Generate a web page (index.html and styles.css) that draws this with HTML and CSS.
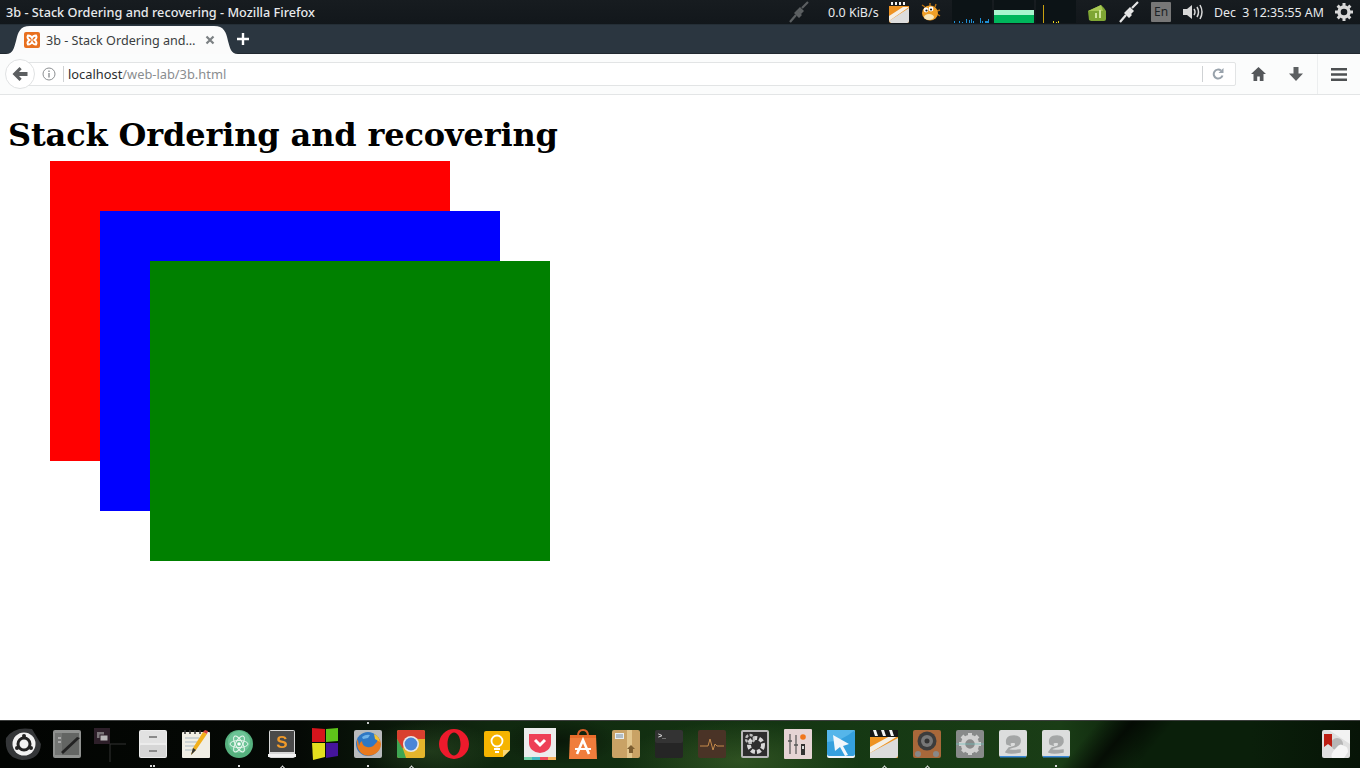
FILE: index.html
```html
<!DOCTYPE html>
<html lang="en">
<head>
<meta charset="utf-8">
<title>3b - Stack Ordering and recovering - Mozilla Firefox</title>
<link rel="stylesheet" href="styles.css">
</head>
<body>
<header class="topbar">
  <div class="window-title">3b - Stack Ordering and recovering - Mozilla Firefox</div>
  <div class="tray">
    <svg class="tray-plug-dim" width="20" height="22" viewBox="0 0 20 22"><path d="M1 21 7 14M13 7l6-6" stroke="#5b5f61" stroke-width="2.2" fill="none"/><path d="M5 12l3-3 5 5-3 3z M8 9l3-3 4 4-3 3z" fill="#5b5f61"/></svg>
    <span class="tray-speed">0.0 KiB/s</span>
    <svg class="tray-clapper" width="20" height="22" viewBox="0 0 20 22"><rect width="20" height="22" rx="2" fill="#ee9322"/><path d="M0 20 20 7v13a2 2 0 0 1-2 2H2z" fill="#ddd"/><path d="M0 15 14 6h6L0 20z" fill="#f5efe6"/><rect width="20" height="5" fill="#1b1b1b"/><path d="M2 1h2v3H2zM6 1h2v3H6zM10 1h2v3h-2zM14 1h2v3h-2z" fill="#f4f4f4"/></svg>
    <svg class="tray-fish" width="20" height="18" viewBox="0 0 20 18"><path d="M1 2l3 2M9 0v3M15 1l-1 3M19 7l-3 1M19 13l-3-2" stroke="#b86f10" stroke-width="1.4"/><ellipse cx="9" cy="10" rx="8" ry="7.5" fill="#f0a028"/><ellipse cx="8" cy="14" rx="5" ry="3" fill="#f8e6b8"/><circle cx="5" cy="7" r="2.4" fill="#fff"/><circle cx="10" cy="6" r="2.4" fill="#fff"/><circle cx="5.5" cy="7.5" r="1.1" fill="#222"/><circle cx="10" cy="6.5" r="1.1" fill="#222"/></svg>
    <svg class="graph graph-net" width="40" height="23" viewBox="0 0 40 23"><path d="M2 21h1v2H2zM7 21h1v2H7zM10 22h1v1h-1zM14 19h1v4h-1zM17 20h1v3h-1zM19 19h1v4h-1zM21 21h1v2h-1zM28 18h1v5h-1zM30 21h1v2h-1zM33 21h3v2h-3zM36 19h1v4h-1z" fill="#1f8fd6"/></svg>
    <svg class="graph graph-mem" width="40" height="23" viewBox="0 0 40 23"><rect y="10" width="40" height="5" fill="#a9f6cf"/><rect y="15" width="40" height="8" fill="#00b65c"/></svg>
    <svg class="graph graph-load" width="40" height="23" viewBox="0 0 40 23"><rect x="7" y="5" width="1" height="18" fill="#c8a010"/><path d="M17 21h1v2h-1zM20 22h1v1h-1zM22 21h1v2h-1z" fill="#e8d020"/></svg>
    <svg class="tray-wallet" width="20" height="17" viewBox="0 0 20 17"><path d="M1 7l13-6 3 3 2 3v8a2 2 0 0 1-2 2H4l-2-1z" fill="#7fa634"/><path d="M1 7l13-6 2 6z" fill="#a9c955"/><path d="M8 14V9h2v5zM12 14V6h2v8z" fill="#cfe59a"/></svg>
    <svg class="tray-plug" width="20" height="22" viewBox="0 0 20 22"><path d="M1 21 7 14M13 7l6-6" stroke="#e6e6e6" stroke-width="2.2" fill="none"/><path d="M5 12l3-3 5 5-3 3z M8 9l3-3 4 4-3 3z" fill="#e6e6e6"/></svg>
    <span class="tray-lang">En</span>
    <svg class="tray-volume" width="20" height="18" viewBox="0 0 20 18"><path d="M0 6h4l5-4v14l-5-4H0z" fill="#d8d8d8"/><path d="M11 6q2 3 0 6M14 4q3 5 0 10M17 2q4 7 0 14" stroke="#d8d8d8" stroke-width="1.5" fill="none"/></svg>
    <span class="tray-date">Dec&nbsp; 3 12:35:55 AM</span>
    <svg class="tray-gear" width="18" height="18" viewBox="0 0 18 18"><circle cx="9" cy="9" r="5" fill="none" stroke="#d8d8d8" stroke-width="3.4"/><path d="M9 0v18M0 9h18M2.6 2.6l12.8 12.8M15.4 2.6 2.6 15.4" stroke="#d8d8d8" stroke-width="3" stroke-dasharray="3 12"/></svg>
  </div>
</header>

<div class="tabbar">
  <div class="tab">
    <svg class="favicon" width="16" height="16" viewBox="0 0 16 16"><rect width="16" height="16" rx="2" fill="#e8701f"/><path d="M4 3.500q3 0 4 2.500 1-2.500 4-2.500 1.500 2.500-1.500 4.500 3 2 1.500 4.500-3 0-4-2.500-1 2.500-4 2.500Q2.500 10 5.500 8 2.500 6 4 3.500z" fill="none" stroke="#fff" stroke-width="1.900"/></svg>
    <span class="tab-title">3b - Stack Ordering and…</span>
    <svg class="tab-close" width="10" height="10" viewBox="0 0 10 10"><path d="M1.500 1.500l7 7M8.500 1.500l-7 7" stroke="#7c8083" stroke-width="2.200"/></svg>
  </div>
  <svg class="new-tab" width="14" height="14" viewBox="0 0 14 14"><path d="M7 1v12M1 7h12" stroke="#fff" stroke-width="2.400"/></svg>
</div>

<nav class="navbar">
  <div class="urlbar">
    <svg class="info" width="14" height="14" viewBox="0 0 14 14"><circle cx="7" cy="7" r="6" fill="none" stroke="#8c8f92" stroke-width="1"/><path d="M7 6v4.500M7 3.500v1.500" stroke="#8c8f92" stroke-width="1.400"/></svg>
    <span class="url-sep"></span>
    <span class="url"><span class="url-host">localhost</span>/web-lab/3b.html</span>
    <span class="url-sep url-sep-end"></span>
    <svg class="reload" width="12" height="12" viewBox="0 0 12 12"><path d="M10.500 7.500A4.500 4.500 0 1 1 9 2.500" fill="none" stroke="#98a2ab" stroke-width="2"/><path d="M6.500 5h5V0z" fill="#98a2ab"/></svg>
  </div>
  <div class="back">
    <svg width="16" height="14" viewBox="0 0 16 14"><path d="M7.500 0 .5 7l7 7 2.200-2.200L7 9h8.500V5H7l2.700-2.800z" fill="#5c5f61"/></svg>
  </div>
  <svg class="nav-home" width="15" height="14" viewBox="0 0 15 14"><path d="M7.500 0 0 7h2.500v7h3.700V9.500h2.600V14h3.700V7H15z" fill="#54575a"/></svg>
  <svg class="nav-down" width="14" height="14" viewBox="0 0 14 14"><path d="M4.500 0h5v6.500H14L7 14 0 6.500h4.500z" fill="#5c5f61"/></svg>
  <span class="nav-divider"></span>
  <svg class="nav-menu" width="16" height="13" viewBox="0 0 16 13"><path d="M0 0h16v2.600H0zM0 5.200h16v2.600H0zM0 10.400h16V13H0z" fill="#4d5052"/></svg>
</nav>

<main class="page">
  <h1 class="heading">Stack Ordering and recovering</h1>
  <div class="box box-red"></div>
  <div class="box box-blue"></div>
  <div class="box box-green"></div>
</main>

<footer class="dock">
  <div class="slot"><svg width="28" height="28" viewBox="0 0 28 28"><path d="M-4 8Q4-4 22-1L31 14Q30 30 12 30Q-6 28-4 8z" fill="#343638"/><circle cx="14" cy="14" r="11.500" fill="#f2f2f2"/><circle cx="14" cy="14" r="6" fill="none" stroke="#222" stroke-width="3"/><circle cx="14" cy="6" r="2" fill="#222"/><circle cx="7" cy="18" r="2" fill="#222"/><circle cx="21" cy="18" r="2" fill="#222"/></svg></div>
  <div class="slot"><svg width="28" height="28" viewBox="0 0 28 28"><rect width="28" height="28" rx="2" fill="#8f918f"/><rect x="2" y="3" width="24" height="22" fill="#737573"/><path d="M9 3h17v22H9z" fill="#636563"/><path d="M8 22 24 7l3 1L10 24z" fill="#222"/><path d="M5 7h3v2H5zM5 11h3v2H5z" fill="#aaa"/></svg></div>
  <div class="slot"><svg class="switcher" width="32" height="34" viewBox="0 0 32 34"><rect width="16" height="16" fill="#2d1f29"/><rect x="3" y="4" width="7" height="6" fill="#7a7478"/><rect x="6" y="7" width="8" height="6" fill="#b8b6b7" stroke="#2d1f29"/><path d="M16 16h16M16 16v18" stroke="#333"/></svg></div>
  <div class="slot has-double"><svg width="28" height="28" viewBox="0 0 28 28"><rect width="28" height="28" rx="2" fill="#ececec"/><rect x="1" y="1" width="26" height="12" rx="1" fill="#e2e2e2"/><rect x="1" y="15" width="26" height="12" rx="1" fill="#d6d6d6"/><rect x="10" y="6" width="8" height="2" fill="#8a8a8a"/><rect x="10" y="20" width="8" height="2" fill="#8a8a8a"/></svg></div>
  <div class="slot"><svg width="28" height="28" viewBox="0 0 28 28"><rect y="2" width="28" height="26" rx="1" fill="#f0eee4"/><path d="M3 8h14M3 12h12M3 16h10M3 20h8" stroke="#a9b7c2"/><path d="M3 0v4M8 0v4M13 0v4M18 0v4" stroke="#333" stroke-width="1.500"/><path d="M9 25l2-7L21 2l4 2-11 16z" fill="#f2b01c"/><path d="M21 2l4 2 1-3-3-1z" fill="#d8443c"/><path d="M9 25l2-7 3 2z" fill="#333"/></svg></div>
  <div class="slot has-dot"><svg width="28" height="28" viewBox="0 0 28 28"><circle cx="14" cy="14" r="14" fill="#56b07e"/><circle cx="14" cy="12" r="11" fill="#6cc496"/><g fill="none" stroke="#e8f6ee" stroke-width="1"><ellipse cx="14" cy="14" rx="9" ry="3.500" transform="rotate(60 14 14)"/><ellipse cx="14" cy="14" rx="9" ry="3.500" transform="rotate(-60 14 14)"/><ellipse cx="14" cy="14" rx="9" ry="3.500"/></g><circle cx="14" cy="14" r="1.800" fill="#fff"/></svg></div>
  <div class="slot has-arrow"><svg width="28" height="28" viewBox="0 0 28 28"><rect x="1" width="26" height="28" rx="2" fill="#d8d8d8"/><rect x="2" y="1" width="24" height="21" fill="#4a4a4a"/><text class="icon-letter sublime" x="14" y="18" text-anchor="middle">S</text><rect x="0" y="24" width="28" height="3" fill="#f2f2f2"/></svg></div>
  <div class="slot"><svg width="28" height="30" viewBox="0 0 28 30"><path d="M1-1 14 0V13L1 13z" fill="#d6141c"/><path d="M15 0 27-1V12L15 13z" fill="#5fc41a"/><path d="M1 14H14V28L2 31z" fill="#e3de1e"/><path d="M15 14H27V27L15 29z" fill="#45149a"/></svg></div>
  <div class="slot has-top-dot has-dot"><svg width="28" height="28" viewBox="0 0 28 28"><rect width="28" height="28" rx="2" fill="#b9bbbc"/><circle cx="14" cy="14" r="12" fill="#2f78c4"/><path d="M8 7q4-3 8-2l-2 3-5 1z" fill="#6fb3e8"/><path d="M3 9q-1 9 4 14 6 5 14 1 6-4 6-10 0-4-3-7 0 5-3 7-3 4-8 3-5-1-5-6-3 2-3 5 0-4-2-7z" fill="#e87a1d"/><path d="M20 4q5 2 6 8l-5-3z" fill="#f4c232"/></svg></div>
  <div class="slot has-arrow"><svg width="28" height="28" viewBox="0 0 28 28"><rect width="28" height="28" rx="2" fill="#e4b52c"/><path d="M0 2a2 2 0 0 1 2-2h24a2 2 0 0 1 2 2v7H14L5 19 0 9z" fill="#d9402f"/><path d="M0 9l6 10 3 9H2a2 2 0 0 1-2-2z" fill="#3fa652"/><circle cx="14" cy="14" r="8" fill="#e8e8e8"/><circle cx="14" cy="14" r="6.400" fill="#4a86d6"/></svg></div>
  <div class="slot"><svg width="30" height="30" viewBox="0 0 30 30"><path fill-rule="evenodd" d="M15 0a15 15 0 1 0 0 30 15 15 0 0 0 0-30zM15 3.500c3.600 0 6.500 5.100 6.500 11.500S18.600 26.500 15 26.500 8.500 21.400 8.500 15 11.400 3.500 15 3.500z" fill="#ee1a2c"/></svg></div>
  <div class="slot"><svg width="26" height="26" viewBox="0 0 26 26"><path d="M2 0h22a2 2 0 0 1 2 2v17l-7 7H2a2 2 0 0 1-2-2V2a2 2 0 0 1 2-2z" fill="#f5b400"/><path d="M19 26v-7h7z" fill="#f9d878"/><circle cx="13" cy="10" r="5.500" fill="none" stroke="#fff" stroke-width="1.800"/><path d="M10 18h6M11 21h4" stroke="#fff" stroke-width="1.800"/></svg></div>
  <div class="slot"><svg width="32" height="32" viewBox="0 0 32 32"><rect width="32" height="32" fill="#ececec"/><rect y="29" width="8" height="3" fill="#72d2a8"/><rect x="8" y="29" width="8" height="3" fill="#3fb6c1"/><rect x="16" y="29" width="8" height="3" fill="#ef4a5a"/><rect x="24" y="29" width="8" height="3" fill="#f6b25c"/><path d="M5 6h22v9a11 10 0 0 1-22 0z" fill="#ee4056"/><path d="M11 12l5 5 5-5" fill="none" stroke="#fff" stroke-width="3"/></svg></div>
  <div class="slot"><svg width="28" height="30" viewBox="0 0 28 30"><path d="M9 7q0-6 5-6t5 6" fill="none" stroke="#d95f26" stroke-width="2"/><path d="M1 6h26l1 24H0z" fill="#f07d3c"/><path d="M1 6h26v3H1z" fill="#e96c2b"/><path d="M8 25 14 11l6 14" fill="none" stroke="#fff" stroke-width="2.600"/><path d="M6 20h16" stroke="#fff" stroke-width="2"/></svg></div>
  <div class="slot"><svg width="28" height="28" viewBox="0 0 28 28"><rect width="28" height="28" rx="2" fill="#c9a265"/><rect x="15" width="5" height="28" fill="#e2c58c"/><rect x="3" y="3" width="9" height="6" fill="#e8edf0"/><path d="M4 5h7M4 7h7" stroke="#7a8a96"/><path d="M19 15l4 4h-2v4h-4v-4h-2z" fill="#7c5d30"/></svg></div>
  <div class="slot"><svg width="28" height="28" viewBox="0 0 28 28"><rect width="28" height="28" rx="2" fill="#252525"/><rect width="28" height="13" rx="2" fill="#333"/><text class="icon-letter terminal" x="3" y="8">&gt;_</text></svg></div>
  <div class="slot"><svg width="28" height="28" viewBox="0 0 28 28"><rect width="28" height="28" rx="2" fill="#4a3326"/><path d="M2 16h8l2-7 3 11 2-6 2 2h7" fill="none" stroke="#c58a4a" stroke-width="1"/></svg></div>
  <div class="slot"><svg width="28" height="28" viewBox="0 0 28 28"><rect width="28" height="28" rx="2" fill="#b8b8b8"/><rect x="2" y="2" width="24" height="24" fill="#2e2e2e"/><circle cx="15" cy="15" r="7" fill="none" stroke="#d8d8d8" stroke-width="4" stroke-dasharray="4 2"/><circle cx="9" cy="9" r="4" fill="none" stroke="#bdbdbd" stroke-width="2.400" stroke-dasharray="3 1.500"/></svg></div>
  <div class="slot"><svg width="28" height="30" viewBox="0 0 28 30"><rect width="28" height="30" rx="1" fill="#e6d5d5"/><path d="M6 5v20M12 6v19" stroke="#555" stroke-width="1.200"/><path d="M4 12h4M10 16h4" stroke="#555" stroke-width="1.500"/><circle cx="19" cy="8" r="2.800" fill="#f0761c"/><rect x="17" y="15" width="4" height="11" fill="#333"/><rect x="18" y="17" width="2" height="3" fill="#ddd"/></svg></div>
  <div class="slot"><svg width="28" height="28" viewBox="0 0 28 28"><rect width="28" height="28" rx="2" fill="#f2f6f9"/><rect width="28" height="26" rx="2" fill="#35a0dd"/><path d="M0 12Q14 12 28 0H0z" fill="#55b6ea"/><path d="M6 5 22 14l-6 2 5 9-3 1-5-9-5 4z" fill="#f2f7fb"/></svg></div>
  <div class="slot has-arrow"><svg width="28" height="28" viewBox="0 0 28 28"><rect width="28" height="28" rx="1" fill="#ee9322"/><path d="M0 23 28 8v17a3 3 0 0 1-3 3H0z" fill="#dcdcdc"/><path d="M0 17 20 6h8L0 23z" fill="#f3efe6"/><rect width="28" height="7" fill="#161616"/><path d="M3 0h3l2 6H5zM11 0h3l2 6h-3zM19 0h3l2 6h-3z" fill="#f4f4f4"/></svg></div>
  <div class="slot has-arrow"><svg width="28" height="28" viewBox="0 0 28 28"><rect width="28" height="28" rx="2" fill="#a8683a"/><circle cx="14" cy="11" r="9.500" fill="#3c3c3c"/><circle cx="14" cy="11" r="6" fill="#777"/><circle cx="14" cy="11" r="2.500" fill="#333"/><circle cx="5" cy="24" r="3" fill="#888"/><circle cx="23" cy="24" r="3" fill="#888"/></svg></div>
  <div class="slot"><svg width="28" height="28" viewBox="0 0 28 28"><rect width="28" height="28" rx="2" fill="#888a8a"/><circle cx="14" cy="14" r="7" fill="none" stroke="#d0d0d0" stroke-width="4.500"/><path d="M14 3v22M3 14h22M6 6l16 16M22 6 6 22" stroke="#d0d0d0" stroke-width="4" stroke-dasharray="4 14"/><path d="M0 14h28" stroke="#6fc0bc" stroke-width="0.700"/></svg></div>
  <div class="slot"><svg width="28" height="28" viewBox="0 0 28 28"><rect width="28" height="27" rx="2" fill="#dcdddd"/><path d="M8 14q-2-8 7-8 7 0 6 6-1 4-7 5-4 1-5 3 3 1 12 0v2q-10 2-14 0l3-4q5-1 6-2 2-3-1-4-5 0-4 3z" fill="#a4a6a6" stroke="#a4a6a6" stroke-width="1.500"/><rect x="1" y="26" width="26" height="1.500" fill="#3a88d8"/></svg></div>
  <div class="slot has-dot"><svg width="28" height="28" viewBox="0 0 28 28"><rect width="28" height="27" rx="2" fill="#dcdddd"/><path d="M8 14q-2-8 7-8 7 0 6 6-1 4-7 5-4 1-5 3 3 1 12 0v2q-10 2-14 0l3-4q5-1 6-2 2-3-1-4-5 0-4 3z" fill="#a4a6a6" stroke="#a4a6a6" stroke-width="1.500"/><rect x="1" y="26" width="26" height="1.500" fill="#3a88d8"/></svg></div>
  <div class="slot slot-end"><svg width="28" height="28" viewBox="0 0 28 28"><rect width="28" height="28" rx="2" fill="#dfdfdf"/><path d="M7 0 28 14V0z" fill="#f2f2f2"/><circle cx="15" cy="14" r="6" fill="#b6b6b6"/><path d="M2 4h8v13l-4-3-4 3z" fill="#bb1d12"/><path d="M14 18q4-6 8-2 4 0 4 6l-4 6H10q-2-4 4-10z" fill="#f6f6f6"/></svg></div>
</footer>
</body>
</html>
```

FILE: styles.css
```css
* { box-sizing: border-box; }

html, body { height: 100%; }

body {
  margin: 0;
  display: flex;
  flex-direction: column;
  height: 768px;
  overflow: hidden;
  background: #fff;
  font-family: "Noto Sans", sans-serif;
}

/* Desktop top panel */
.topbar {
  height: 24px;
  flex: none;
  display: flex;
  align-items: center;
  background: linear-gradient(#171c20, #12171b);
  color: #e8eaec;
}
.window-title {
  padding-left: 6px;
  font-size: 12.7px;
  font-weight: 500;
  white-space: nowrap;
}
.tray {
  margin-left: auto;
  display: flex;
  align-items: center;
  height: 24px;
  padding-right: 7px;
}
.tray svg { display: block; flex: none; }
.tray-speed { margin-left: 19px; font-size: 12.5px; width: 50px; white-space: nowrap; }
.tray-clapper { margin-left: 11px; }
.tray-fish { margin-left: 12px; }
.graph { background: #0c1316; margin-bottom: 1px; }
.graph-net { margin-left: 11px; }
.graph-mem { margin-left: 2px; }
.graph-load { margin-left: 2px; }
.tray-wallet { margin-left: 11px; }
.tray-plug { margin-left: 12px; }
.tray-lang {
  margin-left: 12px;
  width: 20px;
  height: 20px;
  background: #777;
  border-radius: 1px;
  color: #1e2326;
  font-size: 12px;
  line-height: 20px;
  text-align: center;
}
.tray-volume { margin-left: 12px; }
.tray-date { margin-left: 11px; width: 109px; font-size: 12.35px; white-space: nowrap; }
.tray-gear { margin-left: 12px; }

/* Firefox tab strip */
.tabbar {
  height: 30px;
  flex: none;
  display: flex;
  align-items: flex-end;
  background: #2b3640;
  border-top: 1px solid #242e36;
  border-bottom: 1px solid #20282f;
  padding-left: 6px;
}
.tab {
  width: 232px;
  height: 28px;
  margin-bottom: -1px;
  display: flex;
  align-items: center;
  background: #fbfbfb;
  clip-path: path("M0 28C7 28 8 22 10 15 12 6 14 0 24 0H208C218 0 220 6 222 15 224 22 225 28 232 28Z");
  padding-left: 18px;
}
.favicon { display: block; flex: none; }
.tab-title {
  margin-left: 6px;
  width: 154px;
  font-size: 12.6px;
  color: #3a3d40;
  white-space: nowrap;
  overflow: hidden;
}
.tab-close { margin-left: 5px; flex: none; }
.new-tab { margin: 0 0 7px -2px; flex: none; }

/* Navigation bar */
.navbar {
  position: relative;
  height: 41px;
  flex: none;
  display: flex;
  align-items: center;
  background: #fbfcfc;
  border-bottom: 1px solid #e3e5e6;
  padding-left: 20px;
}
.urlbar {
  width: 1216px;
  height: 24px;
  display: flex;
  align-items: center;
  background: #fff;
  border: 1px solid #e2e4e5;
  border-radius: 2px;
  padding-left: 21px;
}
.info { flex: none; }
.url-sep { width: 1px; height: 16px; margin-left: 7px; background: #cfd2d4; flex: none; }
.url-sep-end { margin-left: auto; }
.url {
  margin-left: 4px;
  font-size: 12.85px;
  color: #8a8d90;
  white-space: nowrap;
}
.url-host { color: #2b2e30; }
.reload { margin: 0 11px 0 9px; flex: none; }
.back {
  position: absolute;
  left: 5px;
  top: 5px;
  width: 30px;
  height: 30px;
  display: flex;
  align-items: center;
  justify-content: center;
  background: #fff;
  border: 1px solid #e0e2e3;
  border-radius: 50%;
}
.back svg { display: block; }
.nav-home { margin-left: 15px; flex: none; }
.nav-down { margin-left: 23px; flex: none; }
.nav-divider { width: 1px; height: 40px; margin-left: 14px; background: #eceeef; flex: none; }
.nav-menu { margin-left: 13px; flex: none; }

/* Page content */
.page {
  position: relative;
  flex: 1;
  min-height: 0;
  padding: 0 8px;
  background: #fff;
}
.heading {
  margin: 22px 0 0;
  font-family: "DejaVu Serif", serif;
  font-size: 32px;
  font-weight: 700;
  line-height: 37px;
  letter-spacing: -0.14px;
  color: #000;
  white-space: nowrap;
}
.box { position: absolute; width: 400px; height: 300px; }
.box-red { left: 50px; top: 66px; background: #f00; }
.box-blue { left: 100px; top: 116px; background: #00f; }
.box-green { left: 150px; top: 166px; background: #008000; }

/* Dock */
.dock {
  height: 48px;
  flex: none;
  display: flex;
  gap: 15px;
  padding: 9px 10px 0;
  border-top: 1px solid #3d3f3e;
  background:
    linear-gradient(130deg, transparent 78.500%, rgba(0,0,0,.7) 81%, transparent 84%),
    radial-gradient(ellipse 120px 40px at 740px 40px, rgba(110,150,70,.3), transparent),
    radial-gradient(ellipse 70px 30px at 430px 30px, rgba(90,140,70,.25), transparent),
    radial-gradient(ellipse 60px 24px at 560px 20px, rgba(0,0,0,.45), transparent),
    linear-gradient(90deg, #020402 0, #050905 22%, #10280f 36%, #153813 62%, #1a3d16 78%, #0a1f0a 84%, #0a1f0a 92%, #071407 100%);
}
.slot {
  position: relative;
  width: 28px;
  height: 28px;
  flex: none;
  display: flex;
  align-items: center;
  justify-content: center;
}
.slot svg { display: block; flex: none; overflow: visible; filter: blur(0.5px); }
.slot-end { margin-left: auto; }
.switcher { position: absolute; left: -2px; top: -2px; }
.has-dot::after,
.has-double::after {
  content: "";
  position: absolute;
  left: 13px;
  top: 35px;
  width: 2px;
  height: 2px;
  background: #d8d8d8;
}
.has-double::after { left: 11px; box-shadow: 3px 0 #d8d8d8; }
.has-top-dot::before {
  content: "";
  position: absolute;
  left: 13px;
  top: -8px;
  width: 2px;
  height: 2px;
  background: #c8c8c8;
}
.has-arrow::after {
  content: "";
  position: absolute;
  left: 11px;
  top: 34px;
  width: 6px;
  height: 6px;
  border-left: 1px solid #e8e8e8;
  border-top: 1px solid #e8e8e8;
  transform: rotate(45deg) translate(2px, 2px);
}
.icon-letter { font-family: "Liberation Sans", sans-serif; font-weight: 700; }
.sublime { font-size: 17px; fill: #f09a2a; }
.terminal { font-size: 7px; fill: #e8e8e8; }
```
